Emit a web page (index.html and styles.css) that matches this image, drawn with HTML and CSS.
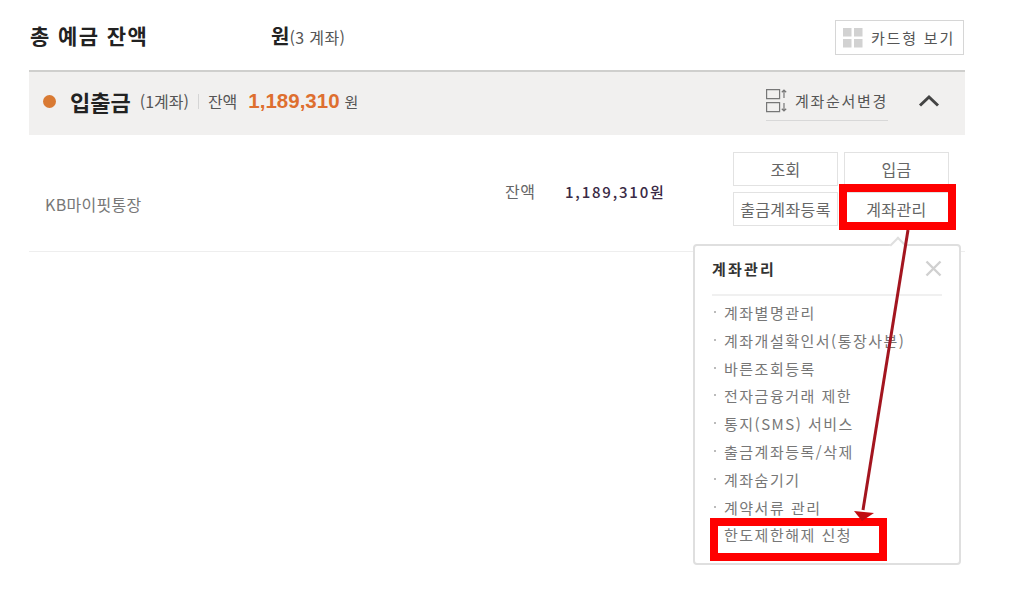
FILE: index.html
```html
<!DOCTYPE html>
<html lang="ko">
<head>
<meta charset="utf-8">
<title>계좌관리</title>
<link rel="stylesheet" href="styles.css">
</head>
<body>
<main class="page">
  <header class="top">
    <div class="total"><strong class="total-label">총 예금 잔액</strong><strong class="total-unit">원</strong><span class="total-count">(3 계좌)</span></div>
    <button class="card-view">
      <svg class="grid-icon" width="20" height="20" viewBox="0 0 20 20"><path fill="#d2d2d2" d="M0 0h8.500v8.500H0zM11 0h8.500v8.500H11zM0 11h8.500v8.500H0zM11 11h8.500v8.500H11z"/></svg>
      <span>카드형 보기</span>
    </button>
  </header>
  <section class="band">
    <span class="dot"></span>
    <strong class="band-title">입출금</strong>
    <span class="band-count">(1계좌)</span>
    <span class="sep"></span>
    <span class="band-label">잔액</span>
    <strong class="band-amount">1,189,310</strong>
    <span class="band-unit">원</span>
    <span class="order">
      <svg width="22" height="28" viewBox="0 0 22 28"><g fill="none" stroke="#777" stroke-width="1.200"><path d="M.6 2.600h13v9H.6zM.6 15.600h13v9H.6z"/><path d="M18 11V3M15.800 5.200 18 3l2.200 2.200M18 16v8M15.800 21.800 18 24l2.200-2.200"/></g></svg>
      <span>계좌순서변경</span>
    </span>
    <svg class="chev" width="22" height="13" viewBox="0 0 22 13"><path d="M2 11.500 11 3l9 8.500" fill="none" stroke="#444" stroke-width="3"/></svg>
  </section>
  <section class="row">
    <span class="acct">KB마이핏통장</span>
    <span class="bal-label">잔액</span>
    <span class="bal-value">1,189,310원</span>
    <div class="btns">
      <button class="btn">조회</button>
      <button class="btn">입금</button>
      <button class="btn">출금계좌등록</button>
      <button class="btn">계좌관리</button>
    </div>
  </section>
</main>

<aside class="pop">
  <span class="pop-notch"></span>
  <div class="pop-head">
    <strong>계좌관리</strong>
    <svg width="17" height="17" viewBox="0 0 17 17"><path d="M1.500 1.500l14 14M15.500 1.500l-14 14" stroke="#d0d0d0" stroke-width="2.400" fill="none"/></svg>
  </div>
  <ul class="pop-list">
    <li>계좌별명관리</li>
    <li>계좌개설확인서(통장사본)</li>
    <li>바른조회등록</li>
    <li>전자금융거래 제한</li>
    <li>통지(SMS) 서비스</li>
    <li>출금계좌등록/삭제</li>
    <li>계좌숨기기</li>
    <li>계약서류 관리</li>
    <li class="plain">한도제한해제 신청</li>
  </ul>
</aside>

<div class="mark mark-btn"></div>
<div class="mark mark-item"></div>
<svg class="arrow" width="1024" height="612" viewBox="0 0 1024 612">
  <path d="M908 230 863 510" stroke="#a3151f" stroke-width="3" fill="none"/>
  <path d="M854 511 874 513 862 521z" fill="#c00d12"/>
</svg>
</body>
</html>
```

FILE: styles.css
```css
* { box-sizing: border-box; }
html, body { margin: 0; padding: 0; background: #fff; }
body {
  width: 1024px;
  height: 612px;
  overflow: hidden;
  position: relative;
  font-family: "Noto Sans CJK KR", "Noto Sans", sans-serif;
  color: #444;
}
button { font-family: inherit; background: #fff; cursor: pointer; padding: 0; }

.page { width: 936px; margin-left: 29px; }

.top {
  height: 70px;
  display: flex;
  justify-content: space-between;
  padding-top: 20px;
}
.total { display: flex; align-items: baseline; height: 34px; margin-left: 1px; }
.total-label { font-size: 21px; letter-spacing: 1.4px; color: #222; line-height: 31px; width: 241px; }
.total-unit { font-size: 20px; color: #222; line-height: 31px; }
.total-count { font-size: 16px; letter-spacing: 0.400px; color: #555; }

.card-view {
  width: 129px;
  height: 35px;
  margin-right: 1px;
  border: 1px solid #d6d6d6;
  display: flex;
  align-items: center;
  padding-left: 7px;
  gap: 8px;
  font-size: 15px;
  letter-spacing: 1.800px;
  color: #555;
}

.band {
  height: 65px;
  background: #f1f0ef;
  border-top: 2px solid #cfcfcd;
  display: flex;
  align-items: center;
  padding: 0 25px 5px 14px;
}
.dot { width: 13px; height: 13px; border-radius: 50%; background: #d97a33; }
.band-title { font-size: 22px; color: #222; margin-left: 14px; margin-right: -2px; }
.band-count { font-size: 16px; color: #555; margin-left: 11px; }
.sep { width: 1px; height: 15px; background: #d5d5d5; margin-left: 9px; }
.band-label { font-size: 16px; color: #555; margin-left: 9px; }
.band-amount { font-family: "Liberation Sans", sans-serif; font-size: 20.500px; color: #de6f2f; margin-left: 11px; }
.band-unit { font-size: 15px; color: #555; margin-left: 5px; }
.order {
  margin-left: auto;
  height: 40px;
  width: 122px;
  display: flex;
  align-items: center;
  gap: 7px;
  font-size: 15px;
  letter-spacing: 1.700px;
  color: #555;
  border-bottom: 1px solid #d8d8d8;
  white-space: nowrap;
}
.chev { margin-left: 30px; margin-top: -1px; }

.row {
  height: 117px;
  border-bottom: 1px solid #eee;
  position: relative;
  display: flex;
  padding-left: 16px;
}
.acct { font-size: 16px; letter-spacing: 0.300px; color: #777; margin-top: 59px; line-height: 20px; width: 460px; }
.bal-label { font-size: 16px; letter-spacing: 0.500px; color: #666; margin-top: 45px; line-height: 22px; width: 60px; }
.bal-value { font-size: 15px; font-weight: 500; color: #3a2a45; margin-top: 46px; line-height: 22px; letter-spacing: 1.800px; width: 168px; white-space: nowrap; }
.btns {
  margin-top: 17px;
  display: grid;
  grid-template-columns: 105px 105px;
  grid-auto-rows: 34px;
  gap: 6px;
}
.btn {
  border: 1px solid #e2e2e2;
  font-size: 16px;
  letter-spacing: 0.400px;
  color: #666;
}

.pop {
  position: absolute;
  left: 693px;
  top: 244px;
  width: 268px;
  height: 321px;
  background: #fff;
  border: 2px solid #dfdfdf;
  border-radius: 4px;
  padding: 0 17px;
}
.pop-notch {
  position: absolute;
  left: 197px;
  top: -7px;
  width: 12px;
  height: 12px;
  background: #fff;
  border-left: 2px solid #dfdfdf;
  border-top: 2px solid #dfdfdf;
  transform: rotate(45deg);
}
.pop-head {
  height: 50px;
  display: flex;
  align-items: center;
  justify-content: space-between;
  padding-bottom: 3px;
  border-bottom: 2px solid #f0f0f0;
  font-size: 15px;
  letter-spacing: 2.200px;
  color: #333;
}
.pop-list {
  list-style: none;
  margin: 3px 0 0;
  padding: 0;
}
.pop-list li {
  height: 27.800px;
  line-height: 27.800px;
  font-size: 15px;
  letter-spacing: 1.500px;
  color: #777;
  padding-left: 12px;
  position: relative;
  white-space: nowrap;
}
.pop-list li::before {
  content: "";
  position: absolute;
  left: 2px;
  top: 12px;
  width: 2px;
  height: 2px;
  background: #bbb;
}
.pop-list li.plain::before { display: none; }

.mark { position: absolute; border: 8px solid #f00; }
.mark-btn { left: 839px; top: 184px; width: 117px; height: 46px; }
.mark-item { left: 710px; top: 518px; width: 177px; height: 43px; }
.arrow { position: absolute; left: 0; top: 0; pointer-events: none; }
```
